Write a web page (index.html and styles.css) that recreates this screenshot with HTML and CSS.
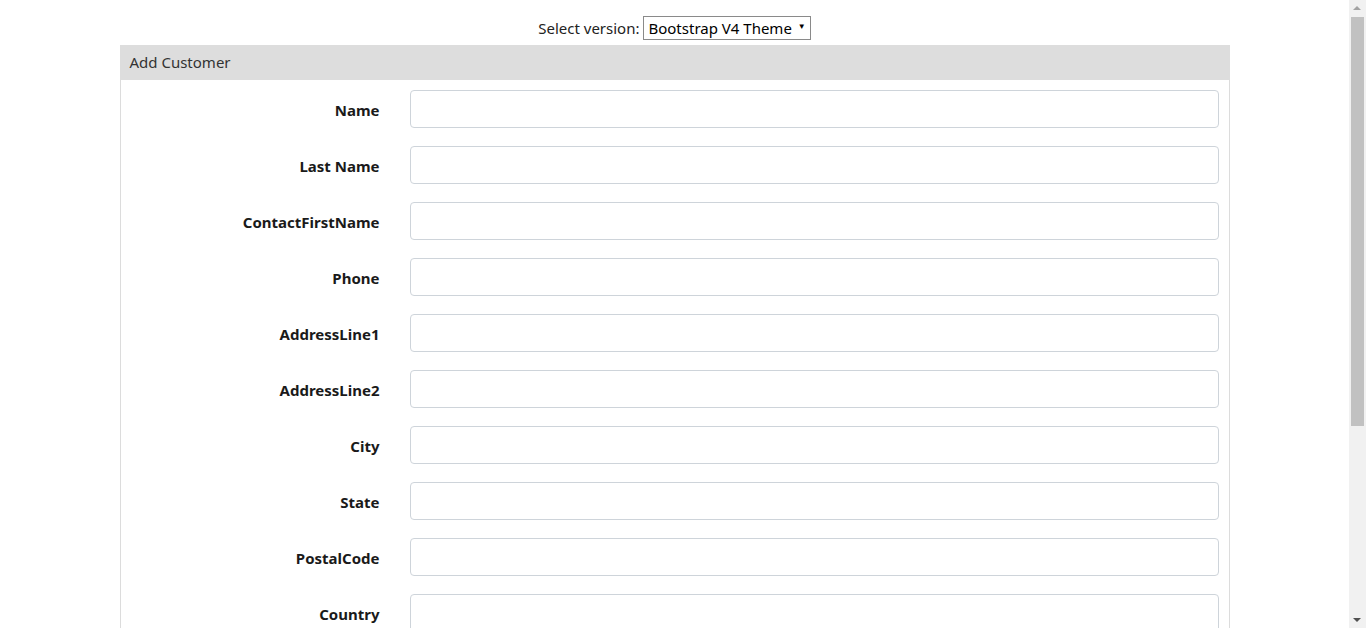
FILE: index.html
```html
<!DOCTYPE html>
<html>
<head>
<meta charset="utf-8">
<link rel="stylesheet" href="styles.css">
</head>
<body>
<div class="viewport">
  <div class="page">
    <div class="top">
      <span class="top-label">Select version:</span>
      <span class="select">Bootstrap V4 Theme <span class="caret">&#9660;</span></span>
    </div>
    <div class="card">
      <div class="card-header">Add Customer</div>
      <div class="card-body">
        <div class="row"><label>Name</label><div class="input"></div></div>
        <div class="row"><label>Last Name</label><div class="input"></div></div>
        <div class="row"><label>ContactFirstName</label><div class="input"></div></div>
        <div class="row"><label>Phone</label><div class="input"></div></div>
        <div class="row"><label>AddressLine1</label><div class="input"></div></div>
        <div class="row"><label>AddressLine2</label><div class="input"></div></div>
        <div class="row"><label>City</label><div class="input"></div></div>
        <div class="row"><label>State</label><div class="input"></div></div>
        <div class="row"><label>PostalCode</label><div class="input"></div></div>
        <div class="row"><label>Country</label><div class="input"></div></div>
        <div class="row"><label>CreditLimit</label><div class="input"></div></div>
      </div>
    </div>
  </div>
  <div class="scrollbar">
    <div class="arrow up"></div>
    <div class="track"><div class="thumb"></div></div>
    <div class="arrow down"></div>
  </div>
</div>
</body>
</html>
```
FILE: styles.css
```css
html, body { margin: 0; padding: 0; height: 100%; overflow: hidden; }
body {
  font-family: "Noto Sans", "Open Sans", sans-serif;
  color: #212529;
  background: #fff;
}
.viewport {
  display: flex;
  height: 628px;
  overflow: hidden;
}
.page {
  flex: 1;
  min-width: 0;
  height: 628px;
  overflow: hidden;
}
.scrollbar {
  width: 17px;
  flex: none;
  background: #f1f1f1;
  display: flex;
  flex-direction: column;
}
.arrow {
  height: 17px;
  flex: none;
  position: relative;
}
.arrow::after {
  content: "";
  position: absolute;
  left: 4px;
  width: 0;
  height: 0;
  border-left: 4px solid transparent;
  border-right: 4px solid transparent;
}
.arrow.up::after { top: 6px; border-bottom: 4px solid #a3a3a3; }
.arrow.down::after { top: 7px; border-top: 4px solid #505050; }
.track { flex: 1; padding: 0 2px; }
.thumb { height: 409px; background: #c1c1c1; }

.top {
  display: flex;
  justify-content: center;
  align-items: center;
  gap: 4px;
  padding-top: 16px;
  height: 24px;
  font-size: 15px;
  color: #222;
}
.select {
  display: inline-flex;
  align-items: center;
  height: 22px;
  border: 1px solid #8a8a8a;
  padding: 0 4px;
  font-size: 15px;
  color: #000;
}
.caret { font-size: 8px; margin-left: 6px; position: relative; top: -3px; }
.card {
  width: 1108px;
  margin: 5px auto 0;
  border: 1px solid #dcdcdc;
  border-top: none;
}
.card-header {
  background: #dddddd;
  height: 35px;
  line-height: 35px;
  padding: 0 10px;
  font-size: 15px;
  color: #333;
  margin: 0 -1px;
}
.card-body {
  padding: 10px;
  display: flex;
  flex-direction: column;
  gap: 18px;
}
.row {
  display: grid;
  grid-template-columns: 249px 1fr;
  column-gap: 30px;
  align-items: center;
}
.row label {
  text-align: right;
  font-weight: 700;
  font-size: 15px;
  color: #1a1a1a;
  padding-top: 1px;
}
.input {
  height: 36px;
  border: 1px solid #ced4da;
  border-radius: 4px;
}
```
